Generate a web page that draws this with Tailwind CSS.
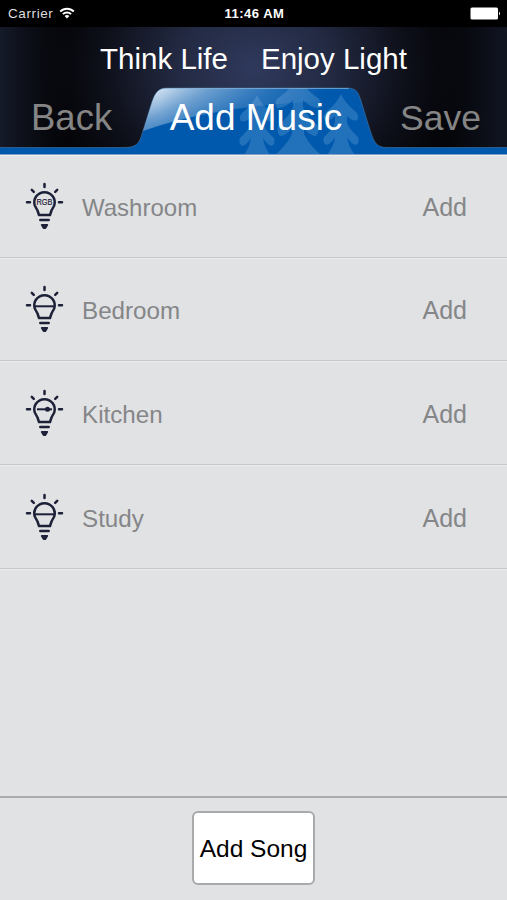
<!DOCTYPE html>
<html lang="en">
<head>
<meta charset="utf-8">
<title>Add Music</title>
<script src="https://cdn.jsdelivr.net/npm/@tailwindcss/browser@4"></script>
</head>
<body class="w-[507px] h-[900px] overflow-hidden flex flex-col bg-[#e1e2e4] font-['Liberation_Sans',sans-serif]">
<svg width="0" height="0" class="absolute">
  <defs>
    <g id="bulb" fill="none" stroke="#1d2138" stroke-width="2.500" stroke-linecap="round">
      <path d="M19.500 3v3M2 21.200h3M34 21.200h3M6.800 8.800l2 2M32.200 8.800l-2 2"/>
      <path stroke-linejoin="round" d="M14 34L12.500 29.500L9.800 24.500A10.200 10.200 0 1 1 29.200 24.500L26.500 29.500L25 34Z"/>
      <path d="M15.300 38.900h8.400"/>
      <path d="M16.700 43.900h5.600L20.400 47h-1.800z" fill="#1d2138" stroke-width="1.800" stroke-linejoin="round"/>
    </g>
  </defs>
</svg>

<div class="h-[27px] shrink-0 bg-black text-white grid grid-cols-3 items-center pl-2 pr-[6px] text-[13.500px] leading-none">
  <div class="flex items-center gap-[6px]">
    <span class="tracking-[0.600px] text-[#dedede] pt-px">Carrier</span>
    <svg width="16" height="13" viewBox="0 0 16 13" fill="none" stroke="#fff" stroke-width="1.900"><path d="M1.200 4.500a9.600 9.600 0 0 1 13.600 0M3.900 7.200a5.800 5.800 0 0 1 8.200 0"/><path d="M8 11.500L5.600 9.100a3.400 3.400 0 0 1 4.800 0z" fill="#fff" stroke="none"/></svg>
  </div>
  <span class="text-center font-bold text-[13px] tracking-[0.500px] whitespace-nowrap">11:46 AM</span>
  <svg class="justify-self-end" width="31" height="13" viewBox="0 0 31 13"><rect x="0.500" y="0.500" width="27.500" height="12" rx="1.500" fill="#fff"/><path d="M29 4.500q2 2 0 4z" fill="#fff"/></svg>
</div>

<header class="relative h-[128px] shrink-0 flex flex-col">
  <svg class="absolute inset-0" width="507" height="128" viewBox="0 27 507 128">
    <defs>
      <radialGradient id="glow" gradientUnits="userSpaceOnUse" cx="254" cy="68" r="215" gradientTransform="translate(254 68) scale(1 .85) translate(-254 -68)">
        <stop offset="0" stop-color="#2f395c"/><stop offset=".35" stop-color="#232a43"/><stop offset=".7" stop-color="#0e101a"/><stop offset="1" stop-color="#020204"/>
      </radialGradient>
      <linearGradient id="edge" x1="0" x2="1"><stop offset="0" stop-color="#151a29"/><stop offset=".14" stop-color="#10131f" stop-opacity="0"/><stop offset=".86" stop-color="#10131f" stop-opacity="0"/><stop offset="1" stop-color="#111522"/></linearGradient>
      <linearGradient id="shine" gradientUnits="userSpaceOnUse" x1="154" y1="86" x2="178" y2="136"><stop offset="0" stop-color="#fff" stop-opacity=".75"/><stop offset=".5" stop-color="#fff" stop-opacity=".32"/><stop offset="1" stop-color="#fff" stop-opacity=".1"/></linearGradient>
      <linearGradient id="fade" gradientUnits="userSpaceOnUse" x1="160" y1="0" x2="325" y2="0"><stop offset="0" stop-color="#fff"/><stop offset="1" stop-color="#000"/></linearGradient>
      <linearGradient id="top" gradientUnits="userSpaceOnUse" x1="0" y1="88" x2="0" y2="125"><stop offset="0" stop-color="#fff" stop-opacity=".42"/><stop offset="1" stop-color="#fff" stop-opacity=".1"/></linearGradient>
      <mask id="shade" maskUnits="userSpaceOnUse" x="120" y="80" width="270" height="75"><rect x="120" y="80" width="270" height="75" fill="url(#fade)"/></mask>
      <clipPath id="tab"><path d="M0 147.500H124C136 147.500 139 144 142 134L151 105C155 92 158 88 168 88H346C356 88 358 91 361 101L370 130C374 143 377 147.500 387 147.500H507V155H0Z"/></clipPath>
      <path id="tree" d="M0 0C-3 7-9 13-15 18Q-19 23-16 26Q-12 28-6 22V28C-8 35-13 39-17 43Q-19 49-15 51Q-10 50-6 43Q-7 52-14 61H14Q7 52 6 43Q10 50 15 51Q19 49 17 43C13 39 8 35 6 28V22Q12 28 16 26Q19 23 15 18C9 13 3 7 0 0Z"/>
    </defs>
    <rect y="27" width="507" height="128" fill="#020204"/>
    <rect y="27" width="507" height="128" fill="url(#glow)"/>
    <rect y="27" width="507" height="128" fill="url(#edge)"/>
    <g clip-path="url(#tab)">
      <rect y="80" width="507" height="75" fill="#0059ad"/>
      <g fill="#377fc4" fill-opacity=".62">
        <use href="#tree" x="257" y="95"/>
        <use href="#tree" x="341" y="94"/>
        <path d="M298 78C291 88 285 93 277 99Q274 104 277 108Q284 109 293 100V107C289 116 283 121 278 126Q276 132 280 136Q286 136 292 128V134Q286 146 275 155H321Q310 146 304 134V128Q310 136 316 136Q320 132 318 126C313 121 307 116 303 107V100Q312 109 319 108Q322 104 319 99C311 93 305 88 298 78Z"/>
      </g>
      <g mask="url(#shade)">
        <path d="M130 136Q205 106 325 101V80H130Z" fill="url(#top)"/>
        <path d="M130 136Q205 106 325 101V80H130Z" fill="url(#shine)"/>
      </g>
      <path d="M164 88.500H349" stroke="#8dbce4" stroke-opacity=".7"/>
      <path d="M0 154.500H507" stroke="#7f9fc4"/>
    </g>
    <path d="M0 147.500H124C136 147.500 139 144 142 134L151 105C155 92 158 88 168 88H346C356 88 358 91 361 101L370 130C374 143 377 147.500 387 147.500H507" fill="none" stroke="#6694bc" stroke-opacity=".5" stroke-width=".8"/>
  </svg>
  <h1 class="relative flex justify-center gap-[33px] pt-[15px] text-[29.500px] leading-[34px] text-white whitespace-nowrap"><span>Think Life</span><span>Enjoy Light</span></h1>
  <nav class="relative flex items-center justify-between pl-[31px] pr-[26px] mt-[19px] text-[36.500px] leading-[44px] text-[#858585] whitespace-nowrap">
    <span class="w-[100px]">Back</span>
    <span class="text-white text-[37px]">Add Music</span>
    <span class="w-[100px] text-right text-[35.500px] pt-px">Save</span>
  </nav>
</header>

<main class="flex-1 flex flex-col text-[#858688] leading-none shadow-[inset_0_1px_0_#efefef]">
  <div class="h-[103px] flex items-center border-b border-[#c6c7c9] shadow-[0_1px_0_#ebecee] pl-[25px] pr-[40px]">
    <svg width="40" height="50" viewBox="0 0 40 50"><use href="#bulb"/><text x="19.500" y="24" text-anchor="middle" font-size="8.500" textLength="16" lengthAdjust="spacingAndGlyphs" fill="#1d2138" stroke="#1d2138" stroke-width=".2" font-family="Liberation Sans">RGB</text></svg>
    <span class="ml-[17px] pt-[3px] text-[24px]">Washroom</span><span class="ml-auto pt-[2px] text-[25px]">Add</span>
  </div>
  <div class="h-[103px] flex items-center border-b border-[#c6c7c9] shadow-[0_1px_0_#ebecee] pl-[25px] pr-[40px]">
    <svg width="40" height="50" viewBox="0 0 40 50"><use href="#bulb"/><path d="M9.500 22.300h20" stroke="#1d2138" stroke-width="2"/></svg>
    <span class="ml-[17px] pt-[5px] text-[24.200px]">Bedroom</span><span class="ml-auto pt-[2px] text-[25px]">Add</span>
  </div>
  <div class="h-[104px] flex items-center border-b border-[#c6c7c9] shadow-[0_1px_0_#ebecee] pl-[25px] pr-[40px]">
    <svg width="40" height="50" viewBox="0 0 40 50"><use href="#bulb"/><path d="M12 21.300h15" stroke="#1d2138" stroke-width="2"/><circle cx="22.500" cy="21.300" r="2.500" fill="#1d2138"/></svg>
    <span class="ml-[17px] pt-[5px] text-[24.200px]">Kitchen</span><span class="ml-auto pt-[4px] text-[25px]">Add</span>
  </div>
  <div class="h-[104px] flex items-center border-b border-[#c6c7c9] shadow-[0_1px_0_#ebecee] pl-[25px] pr-[40px]">
    <svg width="40" height="50" viewBox="0 0 40 50"><use href="#bulb"/><path d="M9.500 22.300h20" stroke="#1d2138" stroke-width="2"/></svg>
    <span class="ml-[17px] pt-[5px] text-[24.200px]">Study</span><span class="ml-auto pt-[4px] text-[25px]">Add</span>
  </div>
</main>

<footer class="h-[104px] shrink-0 border-t-2 border-[#abacae] flex justify-center items-start pt-[13px]">
  <button class="w-[123px] h-[74px] rounded-[6px] border-2 border-[#a9aaac] bg-white text-black text-[24.500px] leading-none whitespace-nowrap flex items-center justify-center pt-[2px]">Add Song</button>
</footer>
</body>
</html>
